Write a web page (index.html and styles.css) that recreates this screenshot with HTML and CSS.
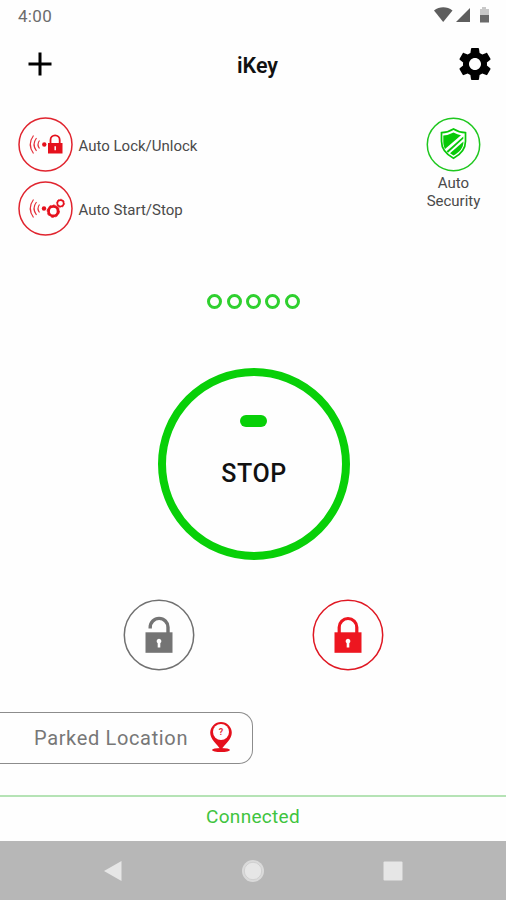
FILE: index.html
```html
<!DOCTYPE html>
<html lang="en">
<head>
    <meta charset="UTF-8">
    <meta name="viewport" content="width=device-width, initial-scale=1.0">
    <title>iKey</title>
    <link rel="stylesheet" href="styles.css">
</head>
<body>
    <div class="screen">
        <!-- Status bar -->
        <div class="status-bar">
            <span class="time">4:00</span>
            <svg class="status-icons" width="56" height="18" viewBox="0 0 56 18">
                <path d="M0 3.5C5.5 -0.8 13 -0.8 18.5 3.5L9.2 15z" fill="#5e5e5e"/>
                <path d="M36 1V15H22z" fill="#5e5e5e"/>
                <path d="M48 0h4v2h3v6h-9V2h2z" fill="#c8c8c8"/>
                <path d="M46 8h9v7.5h-9z" fill="#6a6a6a"/>
            </svg>
        </div>

        <!-- Header -->
        <header class="header">
            <button class="icon-button" aria-label="Add">
                <svg width="24" height="24" viewBox="0 0 24 24"><path d="M12 0.5v23M0.5 12h23" stroke="#000" stroke-width="3"/></svg>
            </button>
            <h1>iKey</h1>
            <button class="icon-button" aria-label="Settings">
                <svg width="40" height="40" viewBox="0 0 24 24"><path d="M19.14 12.94c.04-.3.06-.61.06-.94 0-.32-.02-.64-.07-.94l2.03-1.58c.18-.14.23-.41.12-.61l-1.92-3.32c-.12-.22-.37-.29-.59-.22l-2.39.96c-.5-.38-1.03-.7-1.62-.94l-.36-2.54c-.04-.24-.24-.41-.48-.41h-3.84c-.24 0-.43.17-.47.41l-.36 2.54c-.59.24-1.13.57-1.62.94l-2.39-.96c-.22-.08-.47 0-.59.22L2.74 8.87c-.12.21-.08.47.12.61l2.03 1.58c-.05.3-.09.63-.09.94s.02.64.07.94l-2.03 1.58c-.18.14-.23.41-.12.61l1.92 3.32c.12.22.37.29.59.22l2.39-.96c.5.38 1.03.7 1.62.94l.36 2.54c.05.24.24.41.48.41h3.84c.24 0 .44-.17.47-.41l.36-2.54c.59-.24 1.13-.56 1.62-.94l2.39.96c.22.08.47 0 .59-.22l1.92-3.32c.12-.22.07-.47-.12-.61l-2.01-1.58zM12 15.6c-1.98 0-3.6-1.62-3.6-3.6s1.62-3.6 3.6-3.6 3.6 1.62 3.6 3.6-1.62 3.6-3.6 3.6z"/></svg>
            </button>
        </header>

        <!-- Auto features -->
        <section class="features">
            <div class="feature-list">
                <div class="feature">
                    <svg width="55" height="55" viewBox="0 0 55 55">
                        <circle class="ring red" cx="27.5" cy="27.5" r="26.5"/>
                        <g class="waves">
                            <path d="M15.5 18.5q-6.5 9 0 18M18.5 21q-5 6.5 0 13M21.5 23.5q-3 4 0 8"/>
                        </g>
                        <circle cx="26.3" cy="27.5" r="2.2" fill="#e5101c"/>
                        <path d="M32.500 27v-4a4.600 4.600 0 0 1 9.200 0v4" fill="none" stroke="#e5101c" stroke-width="1.8"/>
                        <path d="M30 26h14.500v10.500H30z" fill="#e5101c"/>
                        <path d="M37.200 29.200v4" stroke="#fff" stroke-width="1.5"/>
                    </svg>
                    <span>Auto Lock/Unlock</span>
                </div>
                <div class="feature">
                    <svg width="55" height="55" viewBox="0 0 55 55">
                        <circle class="ring red" cx="27.5" cy="27.5" r="26.5"/>
                        <g class="waves">
                            <path d="M15.5 18.5q-6.5 9 0 18M18.5 21q-5 6.5 0 13M21.5 23.5q-3 4 0 8"/>
                        </g>
                        <circle cx="26" cy="27.5" r="2.2" fill="#e5101c"/>
                        <circle cx="35.300" cy="30.200" r="4.800" fill="none" stroke="#e5101c" stroke-width="2.8"/>
                        <circle cx="35.300" cy="30.200" r="6.200" fill="none" stroke="#e5101c" stroke-width="0.8" stroke-dasharray="2.5 2.2"/>
                        <circle cx="42.500" cy="22.300" r="3.200" fill="none" stroke="#e5101c" stroke-width="1.6"/>
                        <circle cx="42.500" cy="22.300" r="4.100" fill="none" stroke="#e5101c" stroke-width="0.6" stroke-dasharray="1.6 1.5"/>
                    </svg>
                    <span>Auto Start/Stop</span>
                </div>
            </div>
            <div class="security">
                <svg width="55" height="55" viewBox="0 0 55 55">
                    <circle class="ring green" cx="27.5" cy="27.5" r="26.2"/>
                    <path d="M27.500 12q5.500 3.500 12 3.700v8.500c0 7.500-4.500 13-12 17-7.500-4-12-9.500-12-17v-8.500q6.500-.2 12-3.700z" fill="#fff" stroke="#08c908" stroke-width="1.7"/>
                    <path d="M27.500 15.500q4 2.200 7.500 2.800L19 32c-1.200-2.200-1.700-4.500-1.700-7v-6.500q5.500-.5 10.200-3z" fill="#08c908"/>
                    <path d="M37.300 19.500v2.300L22 35.800l-1.400-1.600z" fill="#08c908"/>
                    <path d="M37.500 24.500c0 6.500-4 10.500-10 14l-3.500-2.300z" fill="#08c908"/>
                </svg>
                <span>Auto<br>Security</span>
            </div>
        </section>

        <div class="dots">
            <i></i><i></i><i></i><i></i><i></i>
        </div>

        <!-- Engine button -->
        <button class="engine">
            <span class="led"></span>
            <span class="engine-label">STOP</span>
        </button>

        <!-- Lock buttons -->
        <div class="locks">
            <svg width="72" height="72" viewBox="0 0 72 72">
                <circle cx="36" cy="36" r="34.7" fill="none" stroke="#707070" stroke-width="1.5"/>
                <path d="M27.200 29.500v-1.200a8.900 8.900 0 0 1 17.800 0v6" fill="none" stroke="#747474" stroke-width="3.4"/>
                <path d="M22.500 33.300h27v20.500h-27z" fill="#747474"/>
                <path d="M36 39.800a2.400 2.400 0 0 1 1.300 4.400v4.300h-2.600v-4.300a2.400 2.400 0 0 1 1.300-4.400z" fill="#fff"/>
            </svg>
            <svg width="72" height="72" viewBox="0 0 72 72">
                <circle cx="36" cy="36" r="34.7" fill="none" stroke="#df1722" stroke-width="1.5"/>
                <path d="M27.200 35v-6.700a8.800 8.800 0 0 1 17.600 0v6.700" fill="none" stroke="#ed1620" stroke-width="3.2"/>
                <path d="M22.500 33.300h27v20.500h-27z" fill="#ed1620"/>
                <path d="M36 39.800a2.400 2.400 0 0 1 1.300 4.400v4.300h-2.600v-4.300a2.400 2.400 0 0 1 1.300-4.400z" fill="#fff"/>
            </svg>
        </div>

        <!-- Parked location -->
        <div class="parked">
            <span>Parked Location</span>
            <svg width="24" height="32" viewBox="0 0 24 32">
                <ellipse cx="12" cy="28" rx="9" ry="2" fill="#e5101c"/>
                <path d="M12 0a10.800 10.800 0 0 1 10.800 10.800c0 6.500-6.500 11-10.800 17.200C7.700 21.800 1.200 17.300 1.200 10.800A10.800 10.800 0 0 1 12 0z" fill="#e5101c"/>
                <circle cx="12" cy="10" r="8" fill="#fff"/>
                <text x="12" y="13" text-anchor="middle">?</text>
            </svg>
        </div>

        <div class="connection">Connected</div>

        <!-- Navigation bar -->
        <nav class="nav-bar">
            <svg width="20" height="22" viewBox="0 0 20 22"><path d="M1 11L18.500 1v20z" fill="#e6e6e6"/></svg>
            <svg width="24" height="24" viewBox="0 0 24 24">
                <circle cx="12" cy="12" r="11" fill="#dadada"/>
                <circle cx="12" cy="12" r="8.7" fill="#e6e6e6" stroke="#cacaca" stroke-width="0.8"/>
            </svg>
            <svg width="20" height="20" viewBox="0 0 20 20"><rect x="0.5" y="0.5" width="19" height="19" rx="1" fill="#e6e6e6"/></svg>
        </nav>
    </div>
</body>
</html>
```
FILE: styles.css
```css
* {
    box-sizing: border-box;
}

body {
    margin: 0;
    font-family: Roboto, sans-serif;
    background-color: #fefefe;
}

button {
    background: none;
    border: none;
    padding: 0;
    font-family: inherit;
}

svg {
    display: block;
    flex-shrink: 0;
}

.screen {
    display: flex;
    flex-direction: column;
    width: 506px;
    height: 900px;
    overflow: hidden;
}

.status-bar {
    display: flex;
    justify-content: space-between;
    align-items: center;
    height: 32px;
    padding: 0 16px 0 18px;
}

.time {
    font-size: 17px;
    letter-spacing: 0.3px;
    color: #6c6c6c;
}

.header {
    display: grid;
    grid-template-columns: 48px 1fr 48px;
    align-items: center;
    height: 64px;
    padding: 0 7px 0 16px;
}

.header h1 {
    margin: 0;
    padding: 2px 0 0 0;
    text-align: center;
    font-size: 21.5px;
    font-weight: 600;
    color: #111;
}

.icon-button {
    display: flex;
    justify-content: center;
}

.features {
    display: flex;
    justify-content: space-between;
    padding: 21px 25px 0 18px;
    height: 197px;
}

.feature-list {
    display: flex;
    flex-direction: column;
    gap: 9px;
}

.feature {
    display: flex;
    align-items: center;
    gap: 5.5px;
    font-size: 15px;
    color: #4a4a4a;
}

.feature span {
    padding-top: 3px;
}

.ring {
    fill: none;
    stroke-width: 1.5;
}

.red {
    stroke: #e0242e;
}

.green {
    stroke: #1fc71f;
}

.waves {
    fill: none;
    stroke: #e5303a;
    stroke-width: 1.2;
}

.security {
    display: flex;
    flex-direction: column;
    align-items: center;
    text-align: center;
    font-size: 15px;
    line-height: 17.5px;
    color: #4a4a4a;
}

.security span {
    padding-top: 3px;
}

.dots {
    display: flex;
    justify-content: center;
    gap: 4.4px;
    height: 75px;
    padding: 1px 0 0 1px;
}

.dots i {
    width: 15px;
    height: 15px;
    border: 3px solid #2fd02f;
    border-radius: 50%;
}

.engine {
    display: flex;
    flex-direction: column;
    align-items: center;
    align-self: center;
    width: 192px;
    height: 192px;
    margin-left: 2px;
    padding-top: 39px;
    border: 8px solid #08d008;
    border-radius: 50%;
}

.led {
    width: 27px;
    height: 12px;
    margin-right: 2px;
    border-radius: 6px;
    background-color: #08d008;
}

.engine-label {
    margin-top: 32px;
    font-size: 25px;
    line-height: 30px;
    font-weight: 500;
    letter-spacing: 0.6px;
    color: #111;
}

.locks {
    display: flex;
    gap: 117.5px;
    padding: 38.5px 0 0 122.5px;
    height: 152px;
}

.parked {
    display: flex;
    align-items: center;
    justify-content: space-between;
    width: 253px;
    height: 52px;
    padding: 0 19.5px 0 34px;
    border: 1.5px solid #8c8c8c;
    border-left: none;
    border-radius: 0 14px 14px 0;
    font-size: 20px;
    letter-spacing: 0.65px;
    color: #777;
}

.parked text {
    font-size: 9px;
    font-weight: 700;
    letter-spacing: 0;
    fill: #e5303a;
}

.connection {
    margin-top: 31px;
    height: 46px;
    border-top: 2px solid #b5e3b5;
    text-align: center;
    font-size: 19px;
    line-height: 40px;
    letter-spacing: 0.3px;
    color: #3fc43f;
}

.nav-bar {
    display: flex;
    justify-content: space-between;
    align-items: center;
    flex: 1;
    padding: 0 103px;
    background-color: #b7b7b7;
}
```
